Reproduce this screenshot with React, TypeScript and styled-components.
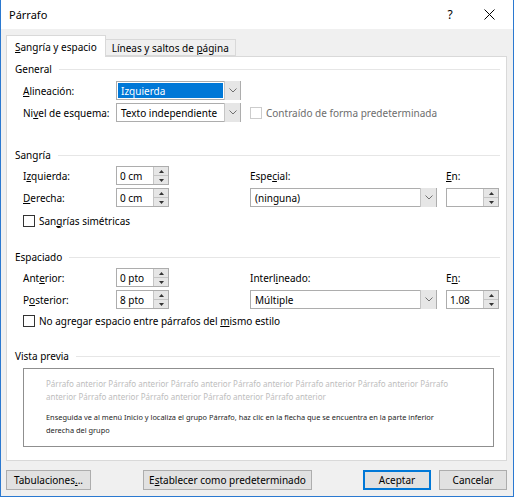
import React from "react";
import styled, { createGlobalStyle } from "styled-components";

const GlobalStyle = createGlobalStyle`
  html, body {
    margin: 0;
    padding: 0;
    background: #ffffff;
  }
  body {
    font-family: "Noto Sans", "Open Sans", sans-serif;
    font-size: 10px;
    color: #000;
  }
`;

const Window = styled.div`
  width: 514px;
  height: 497px;
  box-sizing: border-box;
  border: 1px solid #2b79d0;
  border-top: none;
  background: #f0f0f0;
  display: flex;
  flex-direction: column;
`;

const TitleBar = styled.div`
  height: 29px;
  background: #ffffff;
  display: flex;
  align-items: center;
  padding: 0 4px 0 8px;
`;

const Title = styled.div`
  flex: 1;
  font-size: 11px;
`;

const TitleButton = styled.div<{ $width: number }>`
  width: ${(p) => p.$width}px;
  height: 29px;
  display: flex;
  align-items: center;
  justify-content: center;
  font-size: 12px;
`;

const Body = styled.div`
  flex: 1;
  display: flex;
  flex-direction: column;
  padding: 6px 6px 0 5px;
`;

const TabStrip = styled.div`
  display: flex;
  align-items: flex-end;
  height: 21px;
`;

const Tab = styled.div<{ $active?: boolean }>`
  box-sizing: border-box;
  height: ${(p) => (p.$active ? "22px" : "17px")};
  padding: ${(p) => (p.$active ? "0 8px" : "0 6px")};
  display: flex;
  align-items: center;
  background: ${(p) => (p.$active ? "#ffffff" : "#f0f0f0")};
  border: 1px solid #d9d9d9;
  border-bottom: ${(p) => (p.$active ? "none" : "1px solid #d9d9d9")};
  border-left: ${(p) => (p.$active ? "1px solid #d9d9d9" : "none")};
  margin-bottom: ${(p) => (p.$active ? "-1px" : "0")};
  position: relative;
  z-index: ${(p) => (p.$active ? 1 : 0)};
  white-space: nowrap;
`;

const Panel = styled.div`
  box-sizing: border-box;
  height: 405px;
  background: #ffffff;
  border: 1px solid #d9d9d9;
  padding: 5px 6px 0 8px;
  display: flex;
  flex-direction: column;
`;

const SectionHeader = styled.div<{ $top?: number }>`
  display: flex;
  align-items: center;
  height: 14px;
  margin-top: ${(p) => p.$top ?? 0}px;
  &::after {
    content: "";
    flex: 1;
    height: 1px;
    background: #e6e6e6;
    margin-left: 7px;
  }
`;

const FormGrid = styled.div<{ $top: number }>`
  display: grid;
  grid-template-columns: 93px 134px 196px 53px;
  grid-auto-rows: 19px;
  row-gap: 3px;
  align-items: center;
  margin: ${(p) => p.$top}px 0 0 8px;
`;

const Label = styled.span<{ $disabled?: boolean }>`
  white-space: nowrap;
  color: ${(p) => (p.$disabled ? "#6d6d6d" : "#000")};
`;

const Key = styled.span`
  text-decoration: underline;
  text-underline-offset: 1px;
`;

const SelectBox = styled.div<{ $width: number }>`
  box-sizing: border-box;
  width: ${(p) => p.$width}px;
  height: 19px;
  border: 1px solid #adadad;
  background: #ffffff;
  display: flex;
  align-items: stretch;
  padding: 1px 0 1px 1px;
`;

const SelectValue = styled.div<{ $selected?: boolean }>`
  flex: 1;
  display: flex;
  align-items: center;
  padding-left: 3px;
  margin-right: 1px;
  background: ${(p) => (p.$selected ? "#0078d7" : "transparent")};
  color: ${(p) => (p.$selected ? "#ffffff" : "#000")};
`;

const DropButton = styled.div`
  width: 15px;
  margin: -2px 0;
  background: #e6e6e6;
  border-left: 1px solid #c5c5c5;
  display: flex;
  align-items: center;
  justify-content: center;
`;

const SpinBox = styled.div`
  box-sizing: border-box;
  width: 53px;
  height: 19px;
  border: 1px solid #adadad;
  background: #ffffff;
  display: flex;
`;

const SpinValue = styled.div`
  flex: 1;
  display: flex;
  align-items: center;
  padding-left: 3px;
`;

const SpinButtons = styled.div`
  width: 14px;
  display: flex;
  flex-direction: column;
  border-left: 1px solid #c5c5c5;
  background: #e6e6e6;
`;

const SpinHalf = styled.div`
  flex: 1;
  display: flex;
  align-items: center;
  justify-content: center;
  & + & {
    border-top: 1px solid #c5c5c5;
  }
`;

const CheckRow = styled.label<{ $top?: number }>`
  display: flex;
  align-items: center;
  gap: 4px;
  grid-column: 1 / -1;
  margin-top: ${(p) => p.$top ?? 0}px;
  white-space: nowrap;
`;

const InlineCheck = styled.label`
  display: flex;
  align-items: center;
  gap: 4px;
  grid-column: 3 / 5;
  white-space: nowrap;
`;

const CheckBox = styled.span<{ $disabled?: boolean }>`
  box-sizing: border-box;
  width: 12px;
  height: 12px;
  border: 1px solid ${(p) => (p.$disabled ? "#cccccc" : "#333333")};
  background: #ffffff;
`;

const Preview = styled.div`
  box-sizing: border-box;
  margin: 5px 6px 0 8px;
  height: 79px;
  border: 1px solid #8f8f8f;
  padding: 8px 30px 0 22px;
  line-height: 13px;
`;

const PreviewPara = styled.p<{ $previous?: boolean }>`
  margin: 0 0 8px 0;
  font-size: ${(p) => (p.$previous ? "8px" : "7.4px")};
  color: ${(p) => (p.$previous ? "#bdbdbd" : "#1e1e1e")};
`;

const Footer = styled.div`
  display: flex;
  align-items: center;
  margin-top: 9px;
`;

const Button = styled.button<{ $width: number; $default?: boolean; $gap?: number }>`
  box-sizing: border-box;
  width: ${(p) => p.$width}px;
  height: 20px;
  margin-left: ${(p) => p.$gap ?? 0}px;
  padding: 0;
  font: inherit;
  color: #000;
  background: #e1e1e1;
  border: ${(p) => (p.$default ? "2px solid #0078d7" : "1px solid #adadad")};
`;

const Spacer = styled.div`
  flex: 1;
`;

const Chevron = () => (
  <svg width="8" height="5" viewBox="0 0 8 5">
    <polyline points="0.5,0.5 4,4 7.5,0.5" fill="none" stroke="#707070" strokeWidth="1" />
  </svg>
);

const Arrow = ({ up }: { up?: boolean }) => (
  <svg width="5" height="3" viewBox="0 0 5 3">
    <polygon points={up ? "0,3 5,3 2.5,0" : "0,0 5,0 2.5,3"} fill="#333" />
  </svg>
);

const CloseIcon = () => (
  <svg width="11" height="11" viewBox="0 0 11 11">
    <path d="M0.5 0.5 L10.5 10.5 M10.5 0.5 L0.5 10.5" stroke="#000" strokeWidth="1" />
  </svg>
);

const Select = ({ value, width, selected }: { value: string; width: number; selected?: boolean }) => (
  <SelectBox $width={width}>
    <SelectValue $selected={selected}>{value}</SelectValue>
    <DropButton>
      <Chevron />
    </DropButton>
  </SelectBox>
);

const Spin = ({ value }: { value?: string }) => (
  <SpinBox>
    <SpinValue>{value}</SpinValue>
    <SpinButtons>
      <SpinHalf>
        <Arrow up />
      </SpinHalf>
      <SpinHalf>
        <Arrow />
      </SpinHalf>
    </SpinButtons>
  </SpinBox>
);

const previous = Array(11).fill("Párrafo anterior").join(" ");

const App = () => {
  return (
    <>
      <GlobalStyle />
      <Window>
        <TitleBar>
          <Title>Párrafo</Title>
          <TitleButton $width={38}>?</TitleButton>
          <TitleButton $width={40}>
            <CloseIcon />
          </TitleButton>
        </TitleBar>
        <Body>
          <TabStrip>
            <Tab $active>
              <span>
                <Key>S</Key>angría y espacio
              </span>
            </Tab>
            <Tab>
              <span>
                Líneas y saltos de <Key>p</Key>ágina
              </span>
            </Tab>
          </TabStrip>
          <Panel>
            <SectionHeader>General</SectionHeader>
            <FormGrid $top={5}>
              <Label>
                <Key>A</Key>lineación:
              </Label>
              <Select value="Izquierda" width={125} selected />
              <span />
              <span />
              <Label>
                Ni<Key>v</Key>el de esquema:
              </Label>
              <Select value="Texto independiente" width={125} />
              <InlineCheck>
                <CheckBox $disabled />
                <Label $disabled>Contraído de forma predeterminada</Label>
              </InlineCheck>
            </FormGrid>

            <SectionHeader $top={26}>Sangría</SectionHeader>
            <FormGrid $top={4}>
              <Label>
                I<Key>z</Key>quierda:
              </Label>
              <Spin value="0 cm" />
              <Label>
                Espe<Key>c</Key>ial:
              </Label>
              <Label>
                <Key>E</Key>n:
              </Label>
              <Label>
                <Key>D</Key>erecha:
              </Label>
              <Spin value="0 cm" />
              <Select value="(ninguna)" width={187} />
              <Spin />
              <CheckRow $top={2}>
                <CheckBox />
                <Label>
                  San<Key>g</Key>rías simétricas
                </Label>
              </CheckRow>
            </FormGrid>

            <SectionHeader $top={21}>Espaciado</SectionHeader>
            <FormGrid $top={4}>
              <Label>
                Ant<Key>e</Key>rior:
              </Label>
              <Spin value="0 pto" />
              <Label>
                Interl<Key>i</Key>neado:
              </Label>
              <Label>
                E<Key>n</Key>:
              </Label>
              <Label>
                P<Key>o</Key>sterior:
              </Label>
              <Spin value="8 pto" />
              <Select value="Múltiple" width={187} />
              <Spin value="1.08" />
              <CheckRow $top={-1}>
                <CheckBox />
                <Label>
                  No agregar espacio entre párrafos del <Key>m</Key>ismo estilo
                </Label>
              </CheckRow>
            </FormGrid>

            <SectionHeader $top={18}>Vista previa</SectionHeader>
            <Preview>
              <PreviewPara $previous>{previous}</PreviewPara>
              <PreviewPara>
                Enseguida ve al menú Inicio y localiza el grupo Párrafo, haz clic en la flecha que se encuentra en la
                parte inferior derecha del grupo
              </PreviewPara>
            </Preview>
          </Panel>
          <Footer>
            <Button $width={85}>
              Tabulaciones<Key>.</Key>..
            </Button>
            <Button $width={169} $gap={52}>
              E<Key>s</Key>tablecer como predeterminado
            </Button>
            <Spacer />
            <Button $width={68} $default>
              Aceptar
            </Button>
            <Button $width={68} $gap={8}>
              Cancelar
            </Button>
          </Footer>
        </Body>
      </Window>
    </>
  );
};

export default App;
